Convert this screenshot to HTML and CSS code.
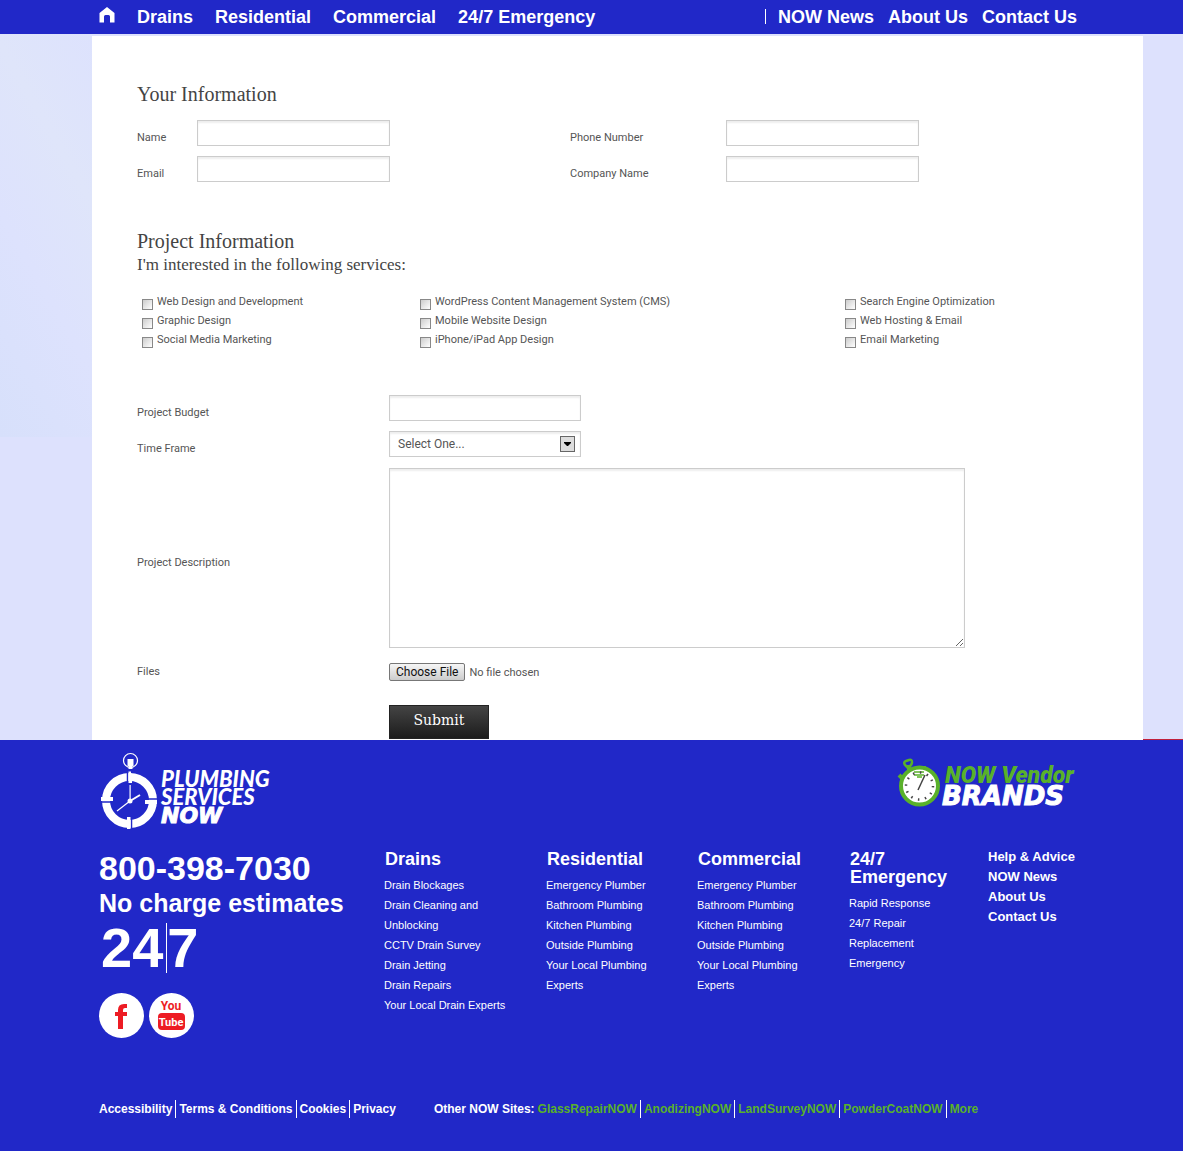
FILE: index.html
```html
<!DOCTYPE html>
<html lang="en">
<head>
<meta charset="utf-8">
<title>Plumbing Services NOW</title>
<link rel="stylesheet" href="styles.css">
</head>
<body>
<header class="topbar">
  <nav class="nav-main">
    <a class="home" href="#" aria-label="Home">
      <svg width="16" height="16" viewBox="0 0 16 16"><path fill="#fff" d="M8 0 .5 6v9.500H5V9.500Q5 8 6.500 8h3Q11 8 11 9.500v6h4.500V6z"/></svg>
    </a>
    <a href="#">Drains</a>
    <a href="#">Residential</a>
    <a href="#">Commercial</a>
    <a href="#">24/7 Emergency</a>
  </nav>
  <nav class="nav-side">
    <a href="#">NOW News</a>
    <a href="#">About Us</a>
    <a href="#">Contact Us</a>
  </nav>
</header>

<main class="page">
  <form class="panel">
    <h2>Your Information</h2>
    <div class="contact">
      <label for="name">Name</label><input class="field" id="name" type="text">
      <label class="second" for="phone">Phone Number</label><input class="field" id="phone" type="text">
      <label for="email">Email</label><input class="field" id="email" type="text">
      <label class="second" for="company">Company Name</label><input class="field" id="company" type="text">
    </div>

    <h2>Project Information</h2>
    <h3>I'm interested in the following services:</h3>
    <div class="services">
      <label><input type="checkbox">Web Design and Development</label>
      <label><input type="checkbox">WordPress Content Management System (CMS)</label>
      <label><input type="checkbox">Search Engine Optimization</label>
      <label><input type="checkbox">Graphic Design</label>
      <label><input type="checkbox">Mobile Website Design</label>
      <label><input type="checkbox">Web Hosting &amp; Email</label>
      <label><input type="checkbox">Social Media Marketing</label>
      <label><input type="checkbox">iPhone/iPad App Design</label>
      <label><input type="checkbox">Email Marketing</label>
    </div>

    <div class="project">
      <label class="low" for="budget">Project Budget</label>
      <input class="field" id="budget" type="text">
      <label class="low" for="time">Time Frame</label>
      <div class="select">
        <select class="field" id="time"><option>Select One...</option></select>
        <svg class="arrow" width="15" height="16" viewBox="0 0 15 16"><rect x=".5" y=".5" width="14" height="15" fill="#ddd" stroke="#666"/><path d="M4 6h7v1L8 10H7L4 7z"/></svg>
      </div>
      <label class="low" for="description">Project Description</label>
      <textarea id="description"></textarea>
      <label for="files">Files</label>
      <input class="file" id="files" type="file">
      <button class="submit" type="submit">Submit</button>
    </div>
  </form>
</main>

<footer class="footer">
  <div class="logos">
    <svg width="178" height="80" viewBox="0 0 178 80" role="img" aria-label="Plumbing Services NOW">
      <circle cx="31.500" cy="10.500" r="7" fill="none" stroke="#fff" stroke-width="1.200"/>
      <path fill="#fff" d="M28.500 9h6v7h-1v3h-4v-3h-1z"/>
      <circle cx="30.500" cy="50.500" r="23.500" fill="none" stroke="#fff" stroke-width="8"/>
      <path stroke="#2128c8" stroke-width="1.500" d="M28.500 21v14M1 52h14M46 49h14M32.500 67v13"/>
      <path fill="#fff" d="M29.500 21.500H32v2h1V33h-3.500zM2 47h12v4H2zM46 50h12v4H46zM28 67h3.500v12H28zM30.500 35h1.200v15h-1.200z"/>
      <circle cx="31" cy="51" r="2.500" fill="#fff"/>
      <path stroke="#fff" stroke-width="2" d="m31 51 10-6"/>
      <path stroke="#fff" stroke-width="1.200" d="m31 51-13 10"/>
      <text class="mark" x="62" y="37" font-size="22">PLUMBING</text>
      <text class="mark" x="62" y="55" font-size="22">SERVICES</text>
      <text class="mark wide" x="62" y="73" font-size="22">NOW</text>
    </svg>
    <svg width="180" height="52" viewBox="0 0 180 52" role="img" aria-label="NOW Vendor Brands">
      <g fill="none" stroke="#59b12a">
        <path stroke-width="2.500" d="m12 12-4-4q-2-3 1-4l3-1q3-1 3 2t-3 5"/>
        <path stroke-width="4" d="M12 8v5M27 9v4M2 18l4 4"/>
        <circle cx="22.500" cy="29" r="18.500" fill="#fff" stroke-width="4"/>
        <path stroke-width="1.500" d="M17 15h10M17 18h10M20 20h5"/>
      </g>
      <g fill="none" stroke="#444">
        <path d="m21 33 7-15" stroke-width="1.500"/>
        <circle cx="22.500" cy="29" r="13.500" stroke-width="2.500" stroke-dasharray="1.500 5.569"/>
      </g>
      <text class="vendor" x="48" y="26" font-size="23">NOW Vendor</text>
      <text class="mark wide" x="45" y="48" font-size="26">BRANDS</text>
    </svg>
  </div>

  <div class="columns">
    <div class="call">
      <p class="phone">800-398-7030</p>
      <p class="charge">No charge estimates</p>
      <p class="hours"><span>24</span><span>7</span></p>
      <div class="social">
        <a href="#" aria-label="Facebook"><svg width="45" height="45" viewBox="0 0 45 45"><circle cx="22.500" cy="22.500" r="22.500" fill="#fff"/><path fill="#ed1c24" d="M19 36V23h-3v-4h3v-2q0-6 6-6h3v4h-2q-2 0-2 2v2h4v4h-4v13z"/></svg></a>
        <a href="#" aria-label="YouTube"><svg width="45" height="45" viewBox="0 0 45 45"><circle cx="22.500" cy="22.500" r="22.500" fill="#fff"/><rect x="9" y="20" width="27" height="17" rx="4" fill="#ed1c24"/><text class="tube" x="22" y="17" font-size="12" fill="#ed1c24">You</text><text class="tube" x="22" y="33" font-size="11" fill="#fff">Tube</text></svg></a>
      </div>
    </div>
    <div class="col">
      <h4>Drains</h4>
      <ul>
        <li><a href="#">Drain Blockages</a></li>
        <li><a href="#">Drain Cleaning and Unblocking</a></li>
        <li><a href="#">CCTV Drain Survey</a></li>
        <li><a href="#">Drain Jetting</a></li>
        <li><a href="#">Drain Repairs</a></li>
        <li><a href="#">Your Local Drain Experts</a></li>
      </ul>
    </div>
    <div class="col">
      <h4>Residential</h4>
      <ul>
        <li><a href="#">Emergency Plumber</a></li>
        <li><a href="#">Bathroom Plumbing</a></li>
        <li><a href="#">Kitchen Plumbing</a></li>
        <li><a href="#">Outside Plumbing</a></li>
        <li><a href="#">Your Local Plumbing Experts</a></li>
      </ul>
    </div>
    <div class="col">
      <h4>Commercial</h4>
      <ul>
        <li><a href="#">Emergency Plumber</a></li>
        <li><a href="#">Bathroom Plumbing</a></li>
        <li><a href="#">Kitchen Plumbing</a></li>
        <li><a href="#">Outside Plumbing</a></li>
        <li><a href="#">Your Local Plumbing Experts</a></li>
      </ul>
    </div>
    <div class="col">
      <h4>24/7 Emergency</h4>
      <ul>
        <li><a href="#">Rapid Response</a></li>
        <li><a href="#">24/7 Repair</a></li>
        <li><a href="#">Replacement</a></li>
        <li><a href="#">Emergency</a></li>
      </ul>
    </div>
    <ul class="help">
      <li><a href="#">Help &amp; Advice</a></li>
      <li><a href="#">NOW News</a></li>
      <li><a href="#">About Us</a></li>
      <li><a href="#">Contact Us</a></li>
    </ul>
  </div>

  <div class="legal">
    <nav class="bar">
      <a href="#">Accessibility</a><a href="#">Terms &amp; Conditions</a><a href="#">Cookies</a><a href="#">Privacy</a>
    </nav>
    <span>Other NOW Sites:</span>
    <nav class="bar sites">
      <a href="#">GlassRepairNOW</a><a href="#">AnodizingNOW</a><a href="#">LandSurveyNOW</a><a href="#">PowderCoatNOW</a><a href="#">More</a>
    </nav>
  </div>
</footer>
</body>
</html>
```

FILE: styles.css
```css
* { box-sizing: border-box; }

body {
  margin: 0;
  padding-right: 17px;
  background: #fff;
  font-family: "Liberation Sans", Arial, sans-serif;
}

a { color: inherit; text-decoration: none; }
h2, h3, h4, p, ul { margin: 0; padding: 0; list-style: none; }
svg { display: block; }

/* Top bar */
.topbar {
  display: flex;
  justify-content: space-between;
  height: 34px;
  padding: 0 106px 0 99px;
  background: #2128c8;
  color: #fff;
  font-size: 18px;
  font-weight: bold;
  line-height: 34px;
  white-space: nowrap;
}
.nav-main { display: flex; gap: 22px; }
.home { padding-top: 7px; }
.nav-side { display: flex; gap: 14px; }
.nav-side::before {
  content: "";
  width: 1px;
  height: 15px;
  margin: 9px -2px 0 0;
  background: #fff;
}

/* Form panel */
.page {
  padding: 2px 40px 0 92px;
  background:
    linear-gradient(#c0203c, #c0203c) right bottom / 40px 1px no-repeat,
    linear-gradient(60deg, #d7e0fb, #dde2fd 40%, #dfe5fa 70%, #dde2fd) left top / 92px 403px no-repeat,
    #dde1fd;
}
.panel {
  padding: 46px 178px 1px 45px;
  background: #fff;
  color: #555;
  font: 11px/16px Roboto, sans-serif;
}
h2 {
  color: #444;
  font: 20px/24px "Liberation Serif", serif;
}
h3 {
  color: #444;
  font: 17px/24px "Liberation Serif", serif;
}
.contact {
  display: grid;
  grid-template-columns: 60px 193px 1fr 193px;
  gap: 10px 0;
  align-items: end;
  margin: 14px 46px 47px 0;
}
.contact .second { justify-self: end; width: 156px; }
.field {
  width: 100%;
  height: 26px;
  padding: 0 8px;
  border: 1px solid #ccc;
  border-radius: 0;
  background: #fff;
  box-shadow: inset 0 2px 2px #eee;
  color: #555;
  font: 12px/16px Roboto, sans-serif;
}
.services {
  display: grid;
  grid-template-columns: 278fr 425fr 160fr;
  row-gap: 3px;
  margin: 17px -40px 47px 5px;
  white-space: nowrap;
}
.services label { display: flex; gap: 4px; }
.services input {
  appearance: none;
  width: 11px;
  height: 11px;
  margin: 5px 0 0;
  border: 1px solid #888;
  background: linear-gradient(135deg, #ccc, #fff);
}
.project {
  display: grid;
  grid-template-columns: 252px 1fr;
  row-gap: 10px;
  align-items: center;
}
.project .low { padding-top: 10px; }
.project .field { width: 192px; }
.select { position: relative; width: 192px; }
.select select { display: block; appearance: none; }
.arrow { position: absolute; top: 5px; right: 6px; pointer-events: none; }
textarea {
  display: block;
  width: 100%;
  height: 180px;
  margin-top: 1px;
  border: 1px solid #ccc;
  box-shadow: inset 0 2px 2px #eee;
}
.file {
  height: 28px;
  padding-top: 5px;
  color: #555;
  font: 11px/16px Roboto, sans-serif;
}
.file::file-selector-button {
  height: 18px;
  margin-right: 4px;
  padding: 0 6px;
  border: 1px solid #777;
  border-radius: 2px;
  background: linear-gradient(#f6f6f6, #ccc);
  color: #111;
  font: 12px/16px Roboto, sans-serif;
}
.submit {
  grid-column: 2;
  width: 100px;
  height: 34px;
  margin-top: 9px;
  padding: 0 0 4px;
  border: 1px solid #222;
  background: linear-gradient(#444, #1c1c1c);
  color: #fff;
  font: 14px/20px "DejaVu Serif", serif;
}

/* Footer */
.footer {
  padding: 10px 106px 33px 99px;
  background: #2128c8;
  color: #fff;
}
.logos { display: flex; justify-content: space-between; }
.logos svg + svg { margin-top: 7px; }
.mark { fill: #fff; font-family: Lato, sans-serif; font-style: italic; font-weight: 900; }
.wide { stroke: #fff; font-family: "DejaVu Sans", sans-serif; }
.vendor { fill: #59b12a; font-family: Roboto, sans-serif; font-style: italic; font-weight: 900; }
.tube { font-family: Roboto, sans-serif; font-weight: bold; text-anchor: middle; }
.columns {
  display: grid;
  grid-template-columns: 285fr 162fr 151fr 152fr 139fr 89fr;
  padding-top: 17px;
}
.call { font-weight: bold; white-space: nowrap; }
.phone { font-size: 34px; line-height: 42px; }
.charge { font-size: 25px; line-height: 28px; }
.hours { display: flex; padding: 6px 0 0 2px; font-size: 56px; line-height: 50px; }
.hours span + span { margin-left: 3px; border-left: 1px solid #fff; }
.social { display: flex; gap: 5px; padding-top: 20px; }
.col { padding-top: 3px; font-size: 11px; line-height: 20px; }
.col ul { width: 125px; }
.col h4 { width: 110px; margin-bottom: 7px; padding-left: 1px; font-size: 18px; line-height: 18px; }
.help { font-size: 13px; font-weight: bold; line-height: 20px; white-space: nowrap; }
.legal {
  display: flex;
  margin-top: 62px;
  font-size: 12px;
  font-weight: bold;
  line-height: 18px;
  white-space: nowrap;
}
.bar { display: flex; }
.bar a + a { margin-left: 3px; padding-left: 3px; border-left: 1px solid #fff; }
.legal > span { margin: 0 3px 0 38px; }
.sites { color: #59b12a; }
```
